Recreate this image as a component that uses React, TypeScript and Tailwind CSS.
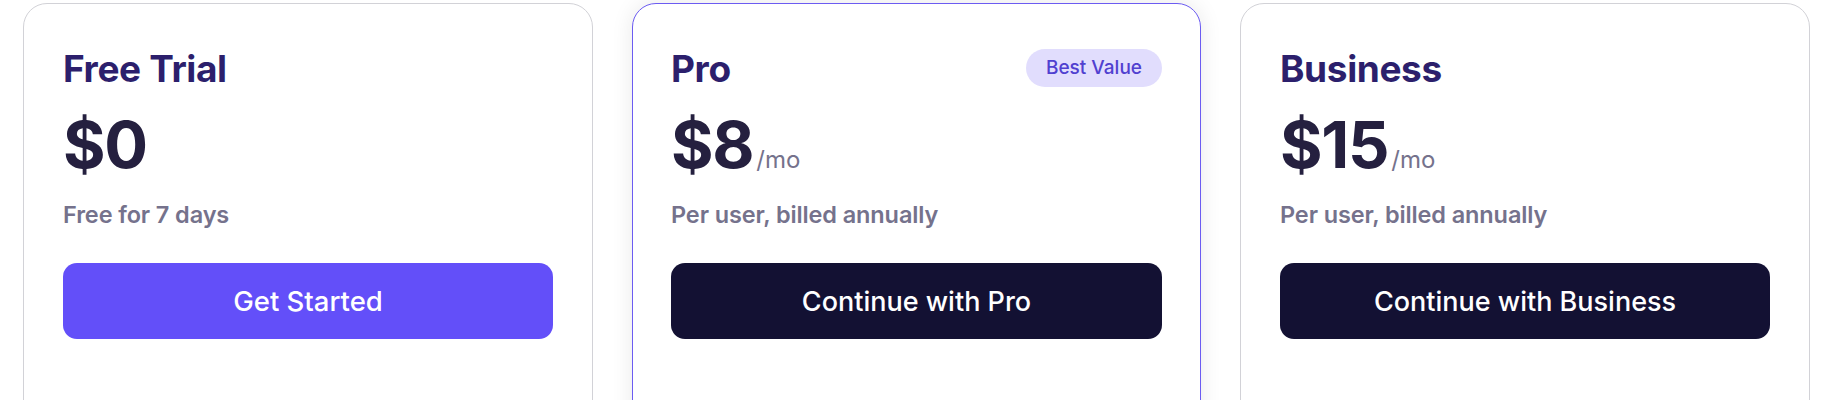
import React from "react";

type Plan = {
  name: string;
  price: string;
  per?: string;
  note: string;
  cta: string;
  featured?: boolean;
  primary?: boolean;
};

const plans: Plan[] = [
  { name: "Free Trial", price: "$0", note: "Free for 7 days", cta: "Get Started", primary: true },
  { name: "Pro", price: "$8", per: "/mo", note: "Per user, billed annually", cta: "Continue with Pro", featured: true },
  { name: "Business", price: "$15", per: "/mo", note: "Per user, billed annually", cta: "Continue with Business" },
];

function Card({ plan }: { plan: Plan }) {
  return (
    <div
      className={
        plan.featured
          ? "w-[569px] h-[520px] shrink-0 rounded-[24px] border border-[#6c5cf2] bg-white px-[38px] pt-[45px] shadow-[0_0_22px_rgba(0,0,0,0.09)]"
          : "w-[570px] h-[520px] shrink-0 rounded-[24px] border border-[#d2d2d7] bg-white px-[39px] pt-[45px]"
      }
    >
      <div className="flex h-[38px] items-center justify-between">
        <h2 className="text-[37px] font-bold leading-none text-[#2c1f6c] tracking-[-0.01em]">{plan.name}</h2>
        {plan.featured && (
          <span className="flex h-[38px] items-center rounded-full bg-[#e1ddfd] px-[20px] text-[19px] font-medium text-[#5040d0]">
            Best Value
          </span>
        )}
      </div>
      <div className="mt-[25px] flex items-baseline">
        <span className="text-[65px] font-bold leading-none text-[#25203f] tracking-[-0.02em]">{plan.price}</span>
        {plan.per && <span className="ml-[3px] text-[24px] font-normal leading-none text-[#75728c]">{plan.per}</span>}
      </div>
      <p className="mt-[26px] text-[23.5px] font-semibold leading-none text-[#75728c] tracking-[-0.005em]">{plan.note}</p>
      <button
        className={
          plan.primary
            ? "mt-[36px] flex h-[76px] w-full items-center justify-center rounded-[14px] bg-[#634ff9] pt-[3px] text-[27.5px] font-medium text-white"
            : "mt-[36px] flex h-[76px] w-full items-center justify-center rounded-[14px] bg-[#131133] pt-[3px] text-[27px] font-medium text-white"
        }
      >
        {plan.cta}
      </button>
    </div>
  );
}

export default function App() {
  return (
    <div className="h-[400px] overflow-hidden bg-white font-['Inter',sans-serif]">
      <div className="flex gap-[39px] pl-[23px] pt-[3px]">
        {plans.map((p) => (
          <Card key={p.name} plan={p} />
        ))}
      </div>
    </div>
  );
}
